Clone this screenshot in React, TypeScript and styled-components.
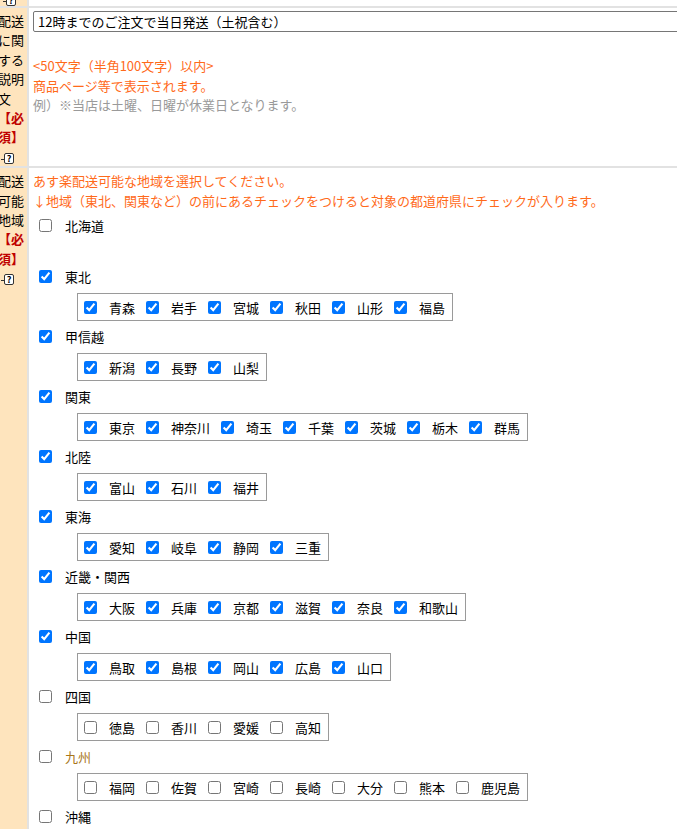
import styled, { createGlobalStyle } from "styled-components";

const GlobalStyle = createGlobalStyle`
    html, body {
        margin: 0;
        padding: 0;
        overflow: hidden;
        background: #fff;
    }
    body {
        font-family: "Noto Sans CJK JP", "Noto Sans", sans-serif;
        font-size: 13px;
        color: #000;
    }
`;

const Page = styled.div`
    width: 720px;
    margin-top: -16px;
`;

const FormRow = styled.div<{ $first?: boolean }>`
    display: grid;
    grid-template-columns: 29px 1fr;
    border-top: ${(props) => (props.$first ? "none" : "2px solid #e2e2e2")};
`;

const LabelCell = styled.div<{ $height?: number }>`
    background: #fee4bd;
    border-right: 2px solid #e2e2e2;
    overflow: hidden;
    padding-top: 3px;
    ${(props) => (props.$height ? `height: ${props.$height}px; box-sizing: border-box;` : "")}
`;

const LabelText = styled.div`
    margin-left: -2px;
    width: 28px;
    line-height: 19.4px;
    word-break: break-all;
`;

const Required = styled.span`
    display: block;
    color: #c00000;
    font-weight: 700;
`;

const HelpIcon = styled.span<{ $top?: number }>`
    position: relative;
    display: inline-block;
    box-sizing: border-box;
    width: 10px;
    height: 11px;
    margin-left: 6px;
    margin-top: ${(props) => props.$top ?? 0}px;
    border: 1px solid #333;
    border-radius: 2px;
    background: #fff;
    font-size: 9px;
    font-weight: 700;
    line-height: 9px;
    text-align: center;
    vertical-align: middle;
    &::before {
        content: "";
        position: absolute;
        left: -4px;
        bottom: 3px;
        width: 3px;
        height: 1px;
        background: #333;
    }
`;

const ContentCell = styled.div`
    padding: 3px 4px;
    line-height: 19.5px;
`;

const TextInput = styled.input`
    display: block;
    box-sizing: border-box;
    width: 700px;
    height: 21px;
    margin: 0 0 24px;
    padding: 1px 4px;
    border: 1px solid #767676;
    border-radius: 2px;
    font-family: inherit;
    font-size: 13px;
    color: #000;
    outline: none;
`;

const Note = styled.div<{ $tone: "orange" | "gray" }>`
    color: ${(props) => (props.$tone === "orange" ? "#ff6a1a" : "#9a9a9a")};
`;

const RegionBlock = styled.div`
    margin-top: 5px;
`;

const RegionRow = styled.div`
    display: flex;
    align-items: center;
    height: 20px;
    padding-left: 2px;
`;

const RegionName = styled.span<{ $accent?: boolean }>`
    margin-left: 13px;
    color: ${(props) => (props.$accent ? "#a8761a" : "#000")};
`;

const Check = styled.input`
    width: 13px;
    height: 13px;
    margin: 0 0 0 4px;
`;

const PrefBox = styled.div`
    display: inline-flex;
    align-items: center;
    margin: 7px 0 0 44px;
    padding: 3px 0 3px 2px;
    border: 1px solid #9a9a9a;
`;

const PrefItem = styled.label`
    display: flex;
    align-items: center;
    height: 20px;
`;

const PrefCheck = styled.input`
    width: 13px;
    height: 13px;
    margin: 0 3px 0 4px;
`;

const PrefName = styled.span`
    padding: 0 7px 0 9px;
`;

const EmptyBox = styled.div`
    height: 26px;
`;

type Region = { name: string; checked: boolean; prefs: string[]; accent?: boolean };

const regions: Region[] = [
    { name: "北海道", checked: false, prefs: [] },
    { name: "東北", checked: true, prefs: ["青森", "岩手", "宮城", "秋田", "山形", "福島"] },
    { name: "甲信越", checked: true, prefs: ["新潟", "長野", "山梨"] },
    { name: "関東", checked: true, prefs: ["東京", "神奈川", "埼玉", "千葉", "茨城", "栃木", "群馬"] },
    { name: "北陸", checked: true, prefs: ["富山", "石川", "福井"] },
    { name: "東海", checked: true, prefs: ["愛知", "岐阜", "静岡", "三重"] },
    { name: "近畿・関西", checked: true, prefs: ["大阪", "兵庫", "京都", "滋賀", "奈良", "和歌山"] },
    { name: "中国", checked: true, prefs: ["鳥取", "島根", "岡山", "広島", "山口"] },
    { name: "四国", checked: false, prefs: ["徳島", "香川", "愛媛", "高知"] },
    { name: "九州", checked: false, prefs: ["福岡", "佐賀", "宮崎", "長崎", "大分", "熊本", "鹿児島"], accent: true },
    { name: "沖縄", checked: false, prefs: [] },
];

const App = () => {
    return (
        <>
            <GlobalStyle />
            <Page>
                <FormRow $first>
                    <LabelCell $height={22}>
                        <HelpIcon $top={5}>?</HelpIcon>
                    </LabelCell>
                    <ContentCell />
                </FormRow>

                <FormRow>
                    <LabelCell>
                        <LabelText>
                            配送に関する説明文
                            <Required>【必須】</Required>
                            <HelpIcon>?</HelpIcon>
                        </LabelText>
                    </LabelCell>
                    <ContentCell>
                        <TextInput defaultValue="12時までのご注文で当日発送（土祝含む）" />
                        <Note $tone="orange">&lt;50文字（半角100文字）以内&gt;</Note>
                        <Note $tone="orange">商品ページ等で表示されます。</Note>
                        <Note $tone="gray">例）※当店は土曜、日曜が休業日となります。</Note>
                    </ContentCell>
                </FormRow>

                <FormRow>
                    <LabelCell>
                        <LabelText>
                            配送可能地域
                            <Required>【必須】</Required>
                            <HelpIcon>?</HelpIcon>
                        </LabelText>
                    </LabelCell>
                    <ContentCell>
                        <Note $tone="orange">あす楽配送可能な地域を選択してください。</Note>
                        <Note $tone="orange">
                            ↓地域（東北、関東など）の前にあるチェックをつけると対象の都道府県にチェックが入ります。
                        </Note>
                        {regions.map((region) => (
                            <RegionBlock key={region.name}>
                                <RegionRow>
                                    <Check type="checkbox" defaultChecked={region.checked} />
                                    <RegionName $accent={region.accent}>{region.name}</RegionName>
                                </RegionRow>
                                {region.prefs.length > 0 ? (
                                    <PrefBox>
                                        {region.prefs.map((pref) => (
                                            <PrefItem key={pref}>
                                                <PrefCheck type="checkbox" defaultChecked={region.checked} />
                                                <PrefName>{pref}</PrefName>
                                            </PrefItem>
                                        ))}
                                    </PrefBox>
                                ) : region.name === "北海道" ? (
                                    <EmptyBox />
                                ) : null}
                            </RegionBlock>
                        ))}
                    </ContentCell>
                </FormRow>
            </Page>
        </>
    );
};

export default App;
